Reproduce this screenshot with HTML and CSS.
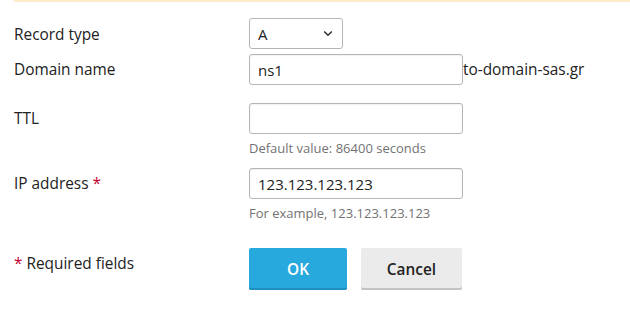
FILE: index.html
```html
<!DOCTYPE html>
<html>
<head>
<meta charset="utf-8">
<link rel="stylesheet" href="styles.css">
</head>
<body>
<div class="topline"></div>
<form class="form">
  <div class="row r1">
    <label class="label">Record type</label>
    <div class="field">
      <select class="select"><option>A</option></select>
    </div>
  </div>
  <div class="row r2">
    <label class="label">Domain name</label>
    <div class="field inline">
      <input class="input" type="text" value="ns1"><span class="suffix">to-domain-sas.gr</span>
    </div>
  </div>
  <div class="row r3">
    <label class="label">TTL</label>
    <div class="field">
      <input class="input" type="text" value="">
      <div class="hint">Default value: 86400 seconds</div>
    </div>
  </div>
  <div class="row r4">
    <label class="label">IP address <span class="req">*</span></label>
    <div class="field">
      <input class="input" type="text" value="123.123.123.123">
      <div class="hint">For example, 123.123.123.123</div>
    </div>
  </div>
  <div class="row r5">
    <div class="label"><span class="req">*</span> Required fields</div>
    <div class="field buttons">
      <button type="button" class="btn ok">OK</button>
      <button type="button" class="btn cancel">Cancel</button>
    </div>
  </div>
</form>
</body>
</html>
```
FILE: styles.css
```css
html, body {
  margin: 0;
  padding: 0;
  background: #fff;
}
body {
  font-family: "Open Sans", "Liberation Sans", sans-serif;
  color: #222;
  font-size: 14px;
}
.topline {
  margin-left: 14px;
  height: 2px;
  background: #fdebcb;
}
.form {
  padding: 16px 0 0 14px;
}
.row {
  display: flex;
  align-items: flex-start;
}
.label {
  width: 235px;
  flex: none;
  font-size: 15.4px;
  line-height: 30px;
  padding-top: 1px;
  color: #222;
}
.r1 .label { line-height: 31px; }
.r2 { margin-top: 4px; }
.r3 { margin-top: 18px; }
.r4 { margin-top: 11px; }
.r5 { margin-top: 26px; }
.r5 .label { line-height: 32px; padding-top: 0; }
.req { color: #c3002f; }
.field.inline {
  display: flex;
  align-items: center;
}
.select {
  appearance: none;
  -webkit-appearance: none;
  width: 94px;
  height: 31px;
  box-sizing: border-box;
  border: 1px solid #b5b5b5;
  border-radius: 3px;
  padding: 0 8px;
  font-family: inherit;
  font-size: 15px;
  color: #222;
  background: #fff url("data:image/svg+xml;utf8,<svg xmlns='http://www.w3.org/2000/svg' width='10' height='7' viewBox='0 0 10 7'><path d='M1.2 1.5 L5 5.2 L8.8 1.5' fill='none' stroke='%23333' stroke-width='1.6'/></svg>") no-repeat right 9px center;
  display: block;
}
.input {
  display: block;
  width: 214px;
  height: 31px;
  box-sizing: border-box;
  border: 1px solid #b5b5b5;
  border-radius: 3px;
  padding: 0 8px;
  font-family: inherit;
  font-size: 15px;
  color: #222;
  box-shadow: inset 0 1px 2px rgba(0,0,0,0.06);
  outline: none;
}
.suffix {
  font-size: 15.4px;
  color: #222;
}
.hint {
  margin-top: 5px;
  font-size: 13px;
  line-height: 18px;
  color: #737373;
}
.buttons {
  display: flex;
  gap: 14px;
}
.btn {
  height: 42px;
  box-sizing: border-box;
  border: none;
  border-radius: 2px;
  font-family: inherit;
  font-size: 15.4px;
  font-weight: 600;
  padding: 0;
  cursor: pointer;
}
.ok {
  width: 98px;
  background: #28a9dd;
  color: #fff;
  box-shadow: inset 0 -2px 0 #1e8fc0;
}
.cancel {
  width: 101px;
  background: #ebebeb;
  color: #222;
  box-shadow: inset 0 -2px 0 #c3c3c3;
}
```
